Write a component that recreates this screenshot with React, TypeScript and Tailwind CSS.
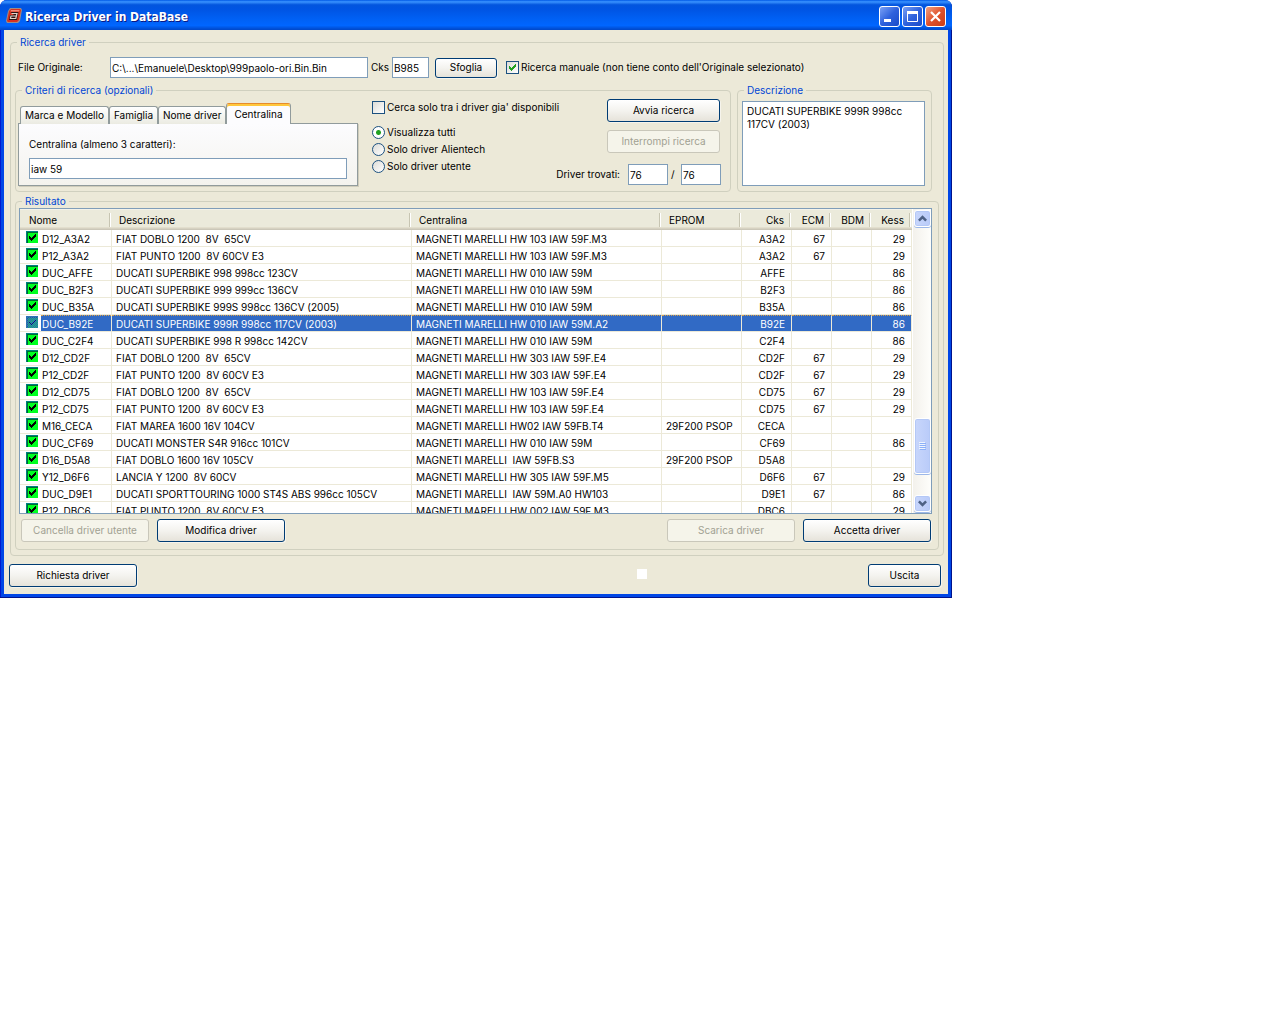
import { useState } from "react";
import type { ReactNode } from "react";
import clsx from "clsx";

type Driver = {
  nome: string;
  descrizione: string;
  centralina: string;
  eprom?: string;
  cks: string;
  ecm?: string;
  bdm?: string;
  kess?: string;
};

const DRIVERS: Driver[] = [
  { nome: "D12_A3A2", descrizione: "FIAT DOBLO 1200  8V  65CV", centralina: "MAGNETI MARELLI HW 103 IAW 59F.M3", cks: "A3A2", ecm: "67", kess: "29" },
  { nome: "P12_A3A2", descrizione: "FIAT PUNTO 1200  8V 60CV E3", centralina: "MAGNETI MARELLI HW 103 IAW 59F.M3", cks: "A3A2", ecm: "67", kess: "29" },
  { nome: "DUC_AFFE", descrizione: "DUCATI SUPERBIKE 998 998cc 123CV", centralina: "MAGNETI MARELLI HW 010 IAW 59M", cks: "AFFE", kess: "86" },
  { nome: "DUC_B2F3", descrizione: "DUCATI SUPERBIKE 999 999cc 136CV", centralina: "MAGNETI MARELLI HW 010 IAW 59M", cks: "B2F3", kess: "86" },
  { nome: "DUC_B35A", descrizione: "DUCATI SUPERBIKE 999S 998cc 136CV (2005)", centralina: "MAGNETI MARELLI HW 010 IAW 59M", cks: "B35A", kess: "86" },
  { nome: "DUC_B92E", descrizione: "DUCATI SUPERBIKE 999R 998cc 117CV (2003)", centralina: "MAGNETI MARELLI HW 010 IAW 59M.A2", cks: "B92E", kess: "86" },
  { nome: "DUC_C2F4", descrizione: "DUCATI SUPERBIKE 998 R 998cc 142CV", centralina: "MAGNETI MARELLI HW 010 IAW 59M", cks: "C2F4", kess: "86" },
  { nome: "D12_CD2F", descrizione: "FIAT DOBLO 1200  8V  65CV", centralina: "MAGNETI MARELLI HW 303 IAW 59F.E4", cks: "CD2F", ecm: "67", kess: "29" },
  { nome: "P12_CD2F", descrizione: "FIAT PUNTO 1200  8V 60CV E3", centralina: "MAGNETI MARELLI HW 303 IAW 59F.E4", cks: "CD2F", ecm: "67", kess: "29" },
  { nome: "D12_CD75", descrizione: "FIAT DOBLO 1200  8V  65CV", centralina: "MAGNETI MARELLI HW 103 IAW 59F.E4", cks: "CD75", ecm: "67", kess: "29" },
  { nome: "P12_CD75", descrizione: "FIAT PUNTO 1200  8V 60CV E3", centralina: "MAGNETI MARELLI HW 103 IAW 59F.E4", cks: "CD75", ecm: "67", kess: "29" },
  { nome: "M16_CECA", descrizione: "FIAT MAREA 1600 16V 104CV", centralina: "MAGNETI MARELLI HW02 IAW 59FB.T4", eprom: "29F200 PSOP", cks: "CECA" },
  { nome: "DUC_CF69", descrizione: "DUCATI MONSTER S4R 916cc 101CV", centralina: "MAGNETI MARELLI HW 010 IAW 59M", cks: "CF69", kess: "86" },
  { nome: "D16_D5A8", descrizione: "FIAT DOBLO 1600 16V 105CV", centralina: "MAGNETI MARELLI  IAW 59FB.S3", eprom: "29F200 PSOP", cks: "D5A8" },
  { nome: "Y12_D6F6", descrizione: "LANCIA Y 1200  8V 60CV", centralina: "MAGNETI MARELLI HW 305 IAW 59F.M5", cks: "D6F6", ecm: "67", kess: "29" },
  { nome: "DUC_D9E1", descrizione: "DUCATI SPORTTOURING 1000 ST4S ABS 996cc 105CV", centralina: "MAGNETI MARELLI  IAW 59M.A0 HW103", cks: "D9E1", ecm: "67", kess: "86" },
  { nome: "P12_DBC6", descrizione: "FIAT PUNTO 1200  8V 60CV E3", centralina: "MAGNETI MARELLI HW 002 IAW 59F.M3", cks: "DBC6", kess: "29" },
];

const COLUMNS: { label: string; width: string; right?: boolean }[] = [
  { label: "Nome", width: "w-[92px]" },
  { label: "Descrizione", width: "" },
  { label: "Centralina", width: "w-[250px]" },
  { label: "EPROM", width: "w-[80px]" },
  { label: "Cks", width: "w-[50px]", right: true },
  { label: "ECM", width: "w-[40px]", right: true },
  { label: "BDM", width: "w-[40px]", right: true },
  { label: "Kess", width: "w-[40px]", right: true },
];

const TABS = ["Marca e Modello", "Famiglia", "Nome driver", "Centralina"];
const FILTERS = ["Visualizza tutti", "Solo driver Alientech", "Solo driver utente"];

const FIELD = "h-[21px] border border-[#7f9db9] bg-white px-px outline-none";

function Group({ title, className, children }: { title: string; className?: string; children: ReactNode }) {
  return (
    <fieldset className={clsx("min-w-0 rounded-[4px] border border-[#d0d0bf]", className)}>
      <legend className="ml-[6px] px-[3px] leading-[13px] text-[#0046d5]">{title}</legend>
      {children}
    </fieldset>
  );
}

function XpButton({ children, className, disabled }: { children: ReactNode; className?: string; disabled?: boolean }) {
  return (
    <button
      type="button"
      disabled={disabled}
      className={clsx(
        "rounded-[3px] border text-center whitespace-nowrap",
        disabled
          ? "border-[#c9c7ba] bg-[#f5f4ea] text-[#a1a192]"
          : "border-[#003c74] bg-linear-to-b from-white via-[#f4f3ef] to-[#e6e3da] shadow-[1px_1px_0_#f6f4ec]",
        className
      )}
    >
      {children}
    </button>
  );
}

function CheckBox({ id, label, defaultChecked }: { id: string; label: string; defaultChecked?: boolean }) {
  return (
    <span className="flex h-[17px] items-center gap-[2px]">
      <span className="relative size-[13px]">
        <input
          id={id}
          type="checkbox"
          defaultChecked={defaultChecked}
          className="peer block size-[13px] appearance-none border border-[#1c5180] bg-linear-to-br from-[#dcdcd7] to-white"
        />
        <svg viewBox="0 0 13 13" className="pointer-events-none absolute inset-0 hidden size-[13px] peer-checked:block" fill="#21a121" shapeRendering="crispEdges">
          <path d="M3 5h1v1h1v1h1v-1h1v-1h1v-1h1v-1h1v3h-1v1h-1v1h-1v1h-1v1h-1v-1h-1v-1h-1z" />
        </svg>
      </span>
      <label htmlFor={id} className="whitespace-nowrap">{label}</label>
    </span>
  );
}

function RowCheck({ selected }: { selected: boolean }) {
  return (
    <svg viewBox="0 0 12 12" className="size-[12px] shrink-0" shapeRendering="crispEdges">
      <rect width="12" height="12" fill={selected ? "#18b565" : "#00ff20"} />
      <path d="M0 0h12v1H1v11H0z" fill={selected ? "#2a7fa0" : "#008080"} />
      <path d="M1 1h11v1H2v10H1z" fill={selected ? "#22708c" : "#006a30"} />
      <path
        d="M3 5h1v1h1v1h1v-1h1v-1h1v-1h1v-1h1v3h-1v1h-1v1h-1v1h-1v1h-1v-1h-1v-1h-1z"
        fill={selected ? "#0a2f5c" : "#000"}
      />
      {selected && (
        <g fill="#316ac5">
          {Array.from({ length: 72 }, (_, i) => (
            <rect key={i} x={(i % 6) * 2 + (Math.floor(i / 6) % 2)} y={Math.floor(i / 6)} width="1" height="1" />
          ))}
        </g>
      )}
    </svg>
  );
}

function CaptionButton({ children, label, close }: { children: ReactNode; label: string; close?: boolean }) {
  return (
    <button
      type="button"
      aria-label={label}
      className={clsx(
        "size-[21px] rounded-[3px] border border-white",
        close ? "bg-linear-to-br from-[#f0a080] via-[#e0522c] to-[#cc3d14]" : "bg-linear-to-br from-[#7ba0f5] via-[#2f62dd] to-[#1a4bc9]"
      )}
    >
      <svg viewBox="0 0 19 19" className="size-[19px]" fill="none" stroke="#fff">{children}</svg>
    </button>
  );
}

function TitleBar() {
  return (
    <header className="flex h-[30px] items-center rounded-t-[7px] bg-[linear-gradient(#0058e6_0%,#3a93ff_6%,#0355de_16%,#0054e3_30%,#0061f5_65%,#0066ff_85%,#0050d8_95%,#0047c8_100%)] px-[6px]">
      <svg viewBox="0 0 16 16" className="mt-[2px] size-[16px] shrink-0">
        <path d="M4 0h11l1 2-2 11-2 2H1l-1-2L2 3z" fill="#9c8c86" />
        <path d="M5 1h9l1 1-2 10-2 2H2l-1-1L3 3z" fill="#d8301f" />
        <path d="M5 2h8.500l-.4 1.500H4.500z" fill="#f08a78" />
        <path d="M4.500 4h8L11 12H3l1-5h4" fill="#2a1512" />
        <path d="M5.500 5.500h5.500L9.800 10.500H4.500L5 8h5" fill="none" stroke="#e6d4cc" strokeWidth="1.200" />
      </svg>
      <h1 className="ml-[3px] flex-1 pt-[4px] font-['DejaVu_Sans_Condensed',sans-serif] text-[12px] font-bold text-white [text-shadow:1px_1px_0_#0a1883]">Ricerca Driver in DataBase</h1>
      <div className="flex gap-[2px] pt-[2px]">
        <CaptionButton label="Riduci a icona"><path d="M4 13.500h7" strokeWidth="3" /></CaptionButton>
        <CaptionButton label="Ingrandisci"><path d="M4.500 5v9.500h10V5" /><path d="M4 5.500h11" strokeWidth="3" /></CaptionButton>
        <CaptionButton label="Chiudi" close><path d="M5 5l9 9M14 5l-9 9" strokeWidth="2.200" /></CaptionButton>
      </div>
    </header>
  );
}

function SearchCriteria() {
  const [tab, setTab] = useState("Centralina");
  return (
    <Group title="Criteri di ricerca (opzionali)" className="flex-1">
      <div className="flex pb-[5px]">
        <div className="ml-[2px] w-[340px] shrink-0 pt-[6px]">
          <div role="tablist" className="flex items-end pl-[2px]">
            {TABS.map((t) => (
              <button
                key={t}
                type="button"
                role="tab"
                aria-selected={t === tab}
                onClick={() => setTab(t)}
                className={clsx(
                  "rounded-t-[3px] border border-b-0 whitespace-nowrap",
                  t === tab
                    ? "relative z-10 h-[21px] border-[#919b9c] border-t-[#e68b2c] bg-[#fcfcfe] px-[7px] shadow-[inset_0_2px_0_#ffc73c]"
                    : "h-[18px] border-[#919b9c] bg-linear-to-b from-white to-[#ebebe2] px-[4px]"
                )}
              >
                {t}
              </button>
            ))}
          </div>
          <div role="tabpanel" className="-mt-px border border-[#919b9c] bg-linear-to-b from-[#fcfcfe] to-[#f4f3ee] px-[10px] pt-[13px] pb-[6px] shadow-[1px_1px_0_#cfccbb]">
            <label htmlFor="centralina" className="block leading-[14px]">{tab} (almeno 3 caratteri):</label>
            <input id="centralina" defaultValue="iaw 59" className={clsx(FIELD, "mt-[7px] block w-full")} />
          </div>
        </div>
        <div className="ml-[14px] min-w-0 flex-1 pt-[2px]">
          <CheckBox id="disponibili" label="Cerca solo tra i driver gia' disponibili" />
          <div role="radiogroup" className="mt-[8px]">
            {FILTERS.map((f, i) => (
              <label key={f} className="flex h-[17px] items-center gap-[2px] whitespace-nowrap">
                <input
                  type="radio"
                  name="filtro"
                  defaultChecked={i === 0}
                  className="size-[13px] appearance-none rounded-full border border-[#1c5180] bg-linear-to-br from-[#dcdcd7] to-white checked:bg-[radial-gradient(circle,#21a121_0_2px,#ffffff_3px)]"
                />
                {f}
              </label>
            ))}
          </div>
        </div>
        <div className="mr-[9px] flex flex-col items-end pt-[2px]">
          <XpButton className="mr-px h-[23px] w-[113px]">Avvia ricerca</XpButton>
          <XpButton disabled className="mt-[8px] mr-px h-[23px] w-[113px]">Interrompi ricerca</XpButton>
          <div className="mt-[11px] flex items-center">
            <label htmlFor="trovati" className="mr-[8px]">Driver trovati:</label>
            <input id="trovati" defaultValue="76" className={clsx(FIELD, "w-[40px]")} />
            <label htmlFor="totale" className="w-[13px] pl-[3px]">/</label>
            <input id="totale" defaultValue="76" className={clsx(FIELD, "w-[40px]")} />
          </div>
        </div>
      </div>
    </Group>
  );
}

function ScrollBar() {
  const cap = "grid w-[17px] place-items-center rounded-[3px] border border-white bg-linear-to-r from-[#c8d6fb] to-[#b9cbf9] shadow-[inset_0_0_0_1px_#b4c8f6,0_1px_0_#9db8e8]";
  return (
    <div className="flex w-[18px] shrink-0 flex-col bg-linear-to-r from-[#f3f1ec] to-[#fefefb] py-px pl-px">
      <button type="button" aria-label="Scorri in alto" className={clsx(cap, "h-[17px]")}>
        <svg viewBox="0 0 9 7" className="h-[7px] w-[9px]" fill="none" stroke="#4d6185" strokeWidth="2.500"><path d="M.9 5.600L4.500 2 8.100 5.600" /></svg>
      </button>
      <div className="flex-[191]" />
      <div className={clsx(cap, "h-[56px]")}>
        <svg viewBox="0 0 7 8" className="h-[8px] w-[7px]" shapeRendering="crispEdges"><path d="M0 .5h6M0 2.500h6M0 4.500h6M0 6.500h6" stroke="#eef4fe" /><path d="M1 1.500h6M1 3.500h6M1 5.500h6M1 7.500h6" stroke="#8cb0f8" /></svg>
      </div>
      <div className="flex-[21]" />
      <button type="button" aria-label="Scorri in basso" className={clsx(cap, "h-[17px]")}>
        <svg viewBox="0 0 9 7" className="h-[7px] w-[9px]" fill="none" stroke="#4d6185" strokeWidth="2.500"><path d="M.9 1.400L4.500 5 8.100 1.400" /></svg>
      </button>
    </div>
  );
}

function DriverTable() {
  const [selected, setSelected] = useState("DUC_B92E");
  return (
    <div className="mr-[6px] ml-[3px] flex h-[306px] border border-[#7f9db9] bg-white">
      <div className="min-w-0 flex-1 overflow-hidden pr-px">
        <table className="w-full table-fixed border-separate border-spacing-0">
          <thead>
            <tr>
              {COLUMNS.map((c, i) => (
                <th key={c.label} className={clsx("h-[21px] bg-[linear-gradient(#f4f3ea_0_1px,#ebeadb_1px_18px,#e2decd_18px_19px,#d6d2c2_19px_20px,#cbc7b8_20px)] p-0 pr-px font-normal", c.width)}>
                  <div className={clsx("flex items-center", c.right ? "justify-end" : "justify-between", i === 0 ? "pl-[9px]" : !c.right && "pl-[7px]")}>
                    <span className="pt-px">{c.label}</span>
                    <span className="ml-[5px] h-[14px] w-[2px] border-r border-l border-r-white border-l-[#c7c5b2]" />
                  </div>
                </th>
              ))}
            </tr>
          </thead>
          <tbody>
            {DRIVERS.map((d) => {
              const on = d.nome === selected;
              const tone = on ? "border-t border-t-[#d9a04a] [border-top-style:dotted] bg-[#316ac5] pt-px text-white" : "pt-[2px]";
              const cell = clsx("h-[17px] border-r border-b border-r-[#ece9d8] border-b-[#ece9d8] leading-[14px] whitespace-pre", tone);
              const left = clsx(cell, "pl-[4px]");
              const right = clsx(cell, "pr-[6px] text-right");
              return (
                <tr key={d.nome} onClick={() => setSelected(d.nome)}>
                  <td className="h-[17px] border-r border-b border-[#ece9d8] p-0 leading-[14px]">
                    <div className="flex gap-[3px] pl-[6px]">
                      <span className="pt-px"><RowCheck selected={on} /></span>
                      <span className={clsx("flex-1 pl-px", tone)}>{d.nome}</span>
                    </div>
                  </td>
                  <td className={left}>{d.descrizione}</td>
                  <td className={left}>{d.centralina}</td>
                  <td className={left}>{d.eprom}</td>
                  <td className={right}>{d.cks}</td>
                  <td className={right}>{d.ecm}</td>
                  <td className={right}>{d.bdm}</td>
                  <td className={right}>{d.kess}</td>
                </tr>
              );
            })}
          </tbody>
        </table>
      </div>
      <ScrollBar />
    </div>
  );
}

export default function App() {
  return (
    <div className="min-h-screen bg-white font-[Inter,sans-serif] text-[10px] text-black">
      <main className="w-full max-w-[952px] rounded-t-[7px] bg-[#0046e6] pb-[4px] shadow-[inset_-1px_-1px_0_#00138c,inset_1px_0_0_#0019cf]">
        <TitleBar />
        <div className="mx-[4px] bg-[#ece9d8] px-[5px] pt-[6px] pb-[7px]">
          <Group title="Ricerca driver" className="mr-[-1px] ml-px pb-[5px]">
            <div className="flex items-center pt-[8px] pl-[7px]">
              <label htmlFor="file" className="w-[92px]">File Originale:</label>
              <input id="file" defaultValue="C:\...\Emanuele\Desktop\999paolo-ori.Bin.Bin" className={clsx(FIELD, "w-[258px]")} />
              <label htmlFor="cks" className="w-[24px] pl-[3px]">Cks</label>
              <input id="cks" defaultValue="B985" className={clsx(FIELD, "w-[37px]")} />
              <XpButton className="mr-[9px] ml-[6px] h-[20px] w-[62px]">Sfoglia</XpButton>
              <CheckBox id="manuale" label="Ricerca manuale (non tiene conto dell'Originale selezionato)" defaultChecked />
            </div>

            <div className="mt-[6px] mr-[11px] ml-[4px] flex gap-[6px]">
              <SearchCriteria />
              <Group title="Descrizione" className="w-[195px]">
                <textarea
                  aria-label="Descrizione"
                  defaultValue="DUCATI SUPERBIKE 999R 998cc 117CV (2003)"
                  className="mt-[4px] ml-[4px] block h-[85px] w-[183px] resize-none border border-[#7f9db9] bg-white px-[4px] py-[3px] leading-[13px] outline-none"
                />
              </Group>
            </div>

            <Group title="Risultato" className="mt-[3px] mr-[4px] ml-[4px] pb-[7px]">
              <DriverTable />
              <div className="mt-[5px] mr-[7px] ml-[5px] flex gap-[8px]">
                <XpButton disabled className="h-[23px] w-[128px]">Cancella driver utente</XpButton>
                <XpButton className="h-[23px] w-[128px]">Modifica driver</XpButton>
                <XpButton disabled className="ml-auto h-[23px] w-[128px]">Scarica driver</XpButton>
                <XpButton className="h-[23px] w-[128px]">Accetta driver</XpButton>
              </div>
            </Group>
          </Group>

          <div className="mt-[8px] mr-[2px] flex">
            <XpButton className="h-[23px] w-[128px]">Richiesta driver</XpButton>
            <div className="mt-[5px] mr-[221px] ml-auto size-[10px] bg-white" />
            <XpButton className="h-[23px] w-[73px]">Uscita</XpButton>
          </div>
        </div>
      </main>
    </div>
  );
}
